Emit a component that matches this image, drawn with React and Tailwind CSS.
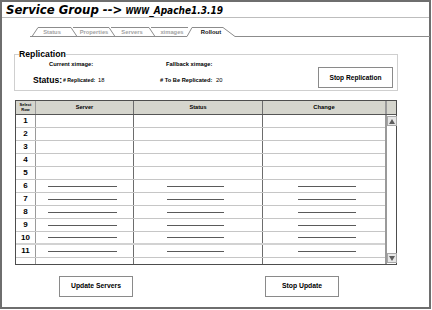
import React from 'react'

const ROWS = [1, 2, 3, 4, 5, 6, 7, 8, 9, 10, 11]

function TabBar() {
  const line = '#8c8c8c'
  return (
    <svg width="428" height="20" className="block font-['Liberation_Sans',Arial,sans-serif]">
      <g fill="none" stroke={line} strokeWidth="1">
        <path d="M28 18.5 H185 M233 18.5 H428" />
        <path d="M30 18.5 L36 9.5 H69 L75 18.5" />
        <path d="M71 9.5 H107 L113 18.5" />
        <path d="M109 9.5 H147 L153 18.5" />
        <path d="M149 9.5 H186" />
        <path d="M185 18.5 L190 9.5 H221 L233 18.5" />
      </g>
      <g fontSize="5.8" fontWeight="700" fill="#a3a3a3" textAnchor="middle">
        <text x="50" y="16">Status</text>
        <text x="92" y="16">Properties</text>
        <text x="130" y="16">Servers</text>
        <text x="170" y="16">ximages</text>
      </g>
      <text x="209" y="16" fontSize="5.9" fontWeight="700" fill="#111" textAnchor="middle">Rollout</text>
    </svg>
  )
}

function Replication() {
  return (
    <fieldset className="ml-[12px] mt-[10px] w-[384px] h-[43px] border border-[#cfcfcf] px-[4px]">
      <legend className="text-[8.7px] leading-[13px] font-bold px-0">Replication</legend>
      <div className="flex items-start -ml-[4px] -mr-[4px]">
        <div className="flex-1">
          <div className="h-[8px] -mt-[1px] flex items-center pl-[34px] text-[5.75px] font-bold">
            <span className="w-[117px]">Current ximage:</span>
            <span>Fallback ximage:</span>
          </div>
          <div className="h-[9px] mt-[8px] flex items-center pl-[18px]">
            <span className="w-[30px] text-[8.6px] font-bold">Status:</span>
            <span className="w-[35px] text-[5.2px] font-bold">#&nbsp;Replicated:</span>
            <span className="w-[62px] text-[5.8px]">18</span>
            <span className="w-[56px] text-[5.7px] font-bold">#&nbsp;To&nbsp;Be&nbsp;Replicated:</span>
            <span className="text-[5.8px]">20</span>
          </div>
        </div>
        <button className="mt-[6px] mr-[4px] w-[75px] h-[21px] border border-[#8a8a8a] bg-white text-[6.6px] font-bold">
          Stop Replication
        </button>
      </div>
    </fieldset>
  )
}

function Cells({ n, header, blank }) {
  const lined = !header && n >= 6
  const lineCls = 'h-px bg-[#5a5a5a]'
  return (
    <>
      <div className="w-[20px] shrink-0 border-r border-[#9a9a9a] flex items-center justify-center">
        {header && <span className="text-[4px] leading-[4.5px] font-bold text-center">Select<br />Row</span>}
        {!header && !blank && <span className="text-[8px] font-bold">{n}</span>}
      </div>
      <div className="w-[98px] shrink-0 border-r border-[#6d6d6d] flex items-center">
        {header && <span className="w-full text-center text-[5.6px] font-bold">Server</span>}
        {lined && <div className={`ml-[12px] w-[69px] ${lineCls}`} />}
      </div>
      <div className="w-[129px] shrink-0 border-r border-[#6d6d6d] flex items-center">
        {header && <span className="w-full text-center text-[5.6px] font-bold">Status</span>}
        {lined && <div className={`ml-[33px] w-[57px] ${lineCls}`} />}
      </div>
      <div className="w-[122px] shrink-0 flex items-center">
        {header && <span className="w-full text-center text-[5.8px] font-bold">Change</span>}
        {lined && <div className={`ml-[35px] w-[58px] ${lineCls}`} />}
      </div>
    </>
  )
}

function ScrollBtn({ up }) {
  return (
    <div className="mx-auto w-[10px] h-[10px] bg-[#e6e6e6] border border-[#a8a8a8] flex items-center justify-center">
      <div
        className={
          up
            ? 'w-0 h-0 border-l-[3px] border-r-[3px] border-b-[5px] border-l-transparent border-r-transparent border-b-[#5e5e5e]'
            : 'w-0 h-0 border-l-[3px] border-r-[3px] border-t-[5px] border-l-transparent border-r-transparent border-t-[#5e5e5e]'
        }
      />
    </div>
  )
}

function ServerTable() {
  return (
    <div className="ml-[13px] mt-[9px] w-[382px] h-[165px] border border-[#4d4d4d] flex flex-col">
      <div className="h-[14px] flex bg-[#d5d5cd] border-b border-[#555]">
        <Cells header />
        <div className="flex-1 border-l-2 border-[#9a9a9a]" />
      </div>
      <div className="flex-1 flex">
        <div className="flex flex-col">
          {ROWS.map((n) => (
            <div
              key={n}
              className={`h-[13px] flex ${n === 10 ? 'border-b-2 border-[#d2d2d2]' : 'border-b border-[#c6c6c6]'}`}
            >
              <Cells n={n} />
            </div>
          ))}
          <div className="flex-1 flex">
            <Cells n={0} blank />
          </div>
        </div>
        <div className="flex-1 border-l-2 border-[#9a9a9a] flex flex-col justify-between py-[1px]">
          <ScrollBtn up />
          <ScrollBtn />
        </div>
      </div>
    </div>
  )
}

export default function App() {
  return (
    <div className="w-[431px] h-[309px] border-2 border-[#6e6e6e] bg-white text-black flex flex-col font-['Liberation_Sans',Arial,sans-serif]">
      <div className="h-[16px] shrink-0 border-b border-[#bdbdbd] pl-[4px] flex items-end leading-none whitespace-nowrap font-['Liberation_Sans_Narrow','DejaVu_Sans_Condensed','Liberation_Sans',sans-serif]">
        <span className="text-[13px] font-bold italic pb-[1px]">Service Group --&gt;</span>
        <span className="ml-[3px] text-[10px] font-bold italic pb-[1px]">
          <span className="text-[8px]">WWW</span>_Apache1.3.19
        </span>
      </div>
      <TabBar />
      <Replication />
      <ServerTable />
      <div className="mt-[11px] flex">
        <button className="ml-[57px] w-[74px] h-[21px] border border-[#8a8a8a] bg-white text-[6.8px] font-bold">
          Update Servers
        </button>
        <button className="ml-[132px] w-[74px] h-[21px] border border-[#8a8a8a] bg-white text-[6.8px] font-bold">
          Stop Update
        </button>
      </div>
    </div>
  )
}
